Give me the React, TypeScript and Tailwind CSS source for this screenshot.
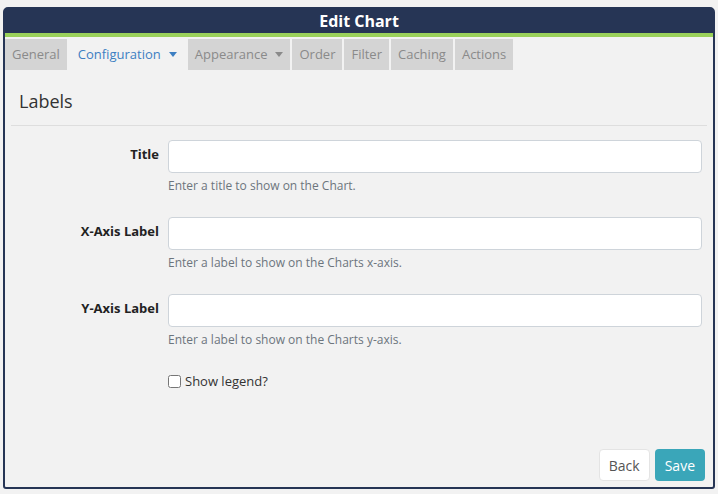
const tabs = [
  { label: "General" },
  { label: "Configuration", caret: true, active: true },
  { label: "Appearance", caret: true },
  { label: "Order" },
  { label: "Filter" },
  { label: "Caching" },
  { label: "Actions" },
];

const fields = [
  { id: "title", label: "Title", help: "Enter a title to show on the Chart." },
  { id: "x-axis", label: "X-Axis Label", help: "Enter a label to show on the Charts x-axis." },
  { id: "y-axis", label: "Y-Axis Label", help: "Enter a label to show on the Charts y-axis." },
];

function Caret({ className }: { className: string }) {
  return (
    <svg width="8" height="5" viewBox="0 0 8 5" className={className}>
      <path d="M0 0h8L4 5z" fill="currentColor" />
    </svg>
  );
}

export default function App() {
  return (
    <div
      className="w-[718px] h-[494px] bg-[#f2f2f2] pt-[7px] pl-[3px]"
      style={{ fontFamily: '"Open Sans", "Liberation Sans", sans-serif' }}
    >
      <div className="w-[712px] h-[482px] border-2 border-[#263555] rounded-t-[5px] rounded-b-[3px] flex flex-col bg-[#f2f2f2]">
        {/* Header */}
        <div className="h-[24px] bg-[#263555] flex items-center justify-center text-white font-bold text-[16px] leading-none">
          Edit Chart
        </div>
        <div className="h-[4px] bg-[#9ad15a]" />

        {/* Tabs */}
        <div className="flex gap-[2px] mt-[2px] h-[31px]">
          {tabs.map((t) => (
            <div
              key={t.label}
              className={
                t.active
                  ? "flex items-center gap-[8px] px-[9px] text-[13px] text-[#3d7fc2] bg-[#f2f2f2]"
                  : "flex items-center gap-[8px] px-[7px] text-[13px] text-[#8a8a8a] bg-[#d4d4d4]"
              }
            >
              {t.label}
              {t.caret && (
                <Caret className={t.active ? "text-[#3d7fc2]" : "text-[#8a8a8a]"} />
              )}
            </div>
          ))}
        </div>

        {/* Content */}
        <div className="flex-1 flex flex-col px-[6px]">
          <div className="pt-[18px] pb-[10px] px-[8px] border-b border-[#dedede]">
            <h2 className="text-[18px] leading-[27px] text-[#333]">Labels</h2>
          </div>

          <div className="flex flex-col gap-[22px] pt-[14px]">
            {fields.map((f) => (
              <div key={f.id} className="flex items-start">
                <label
                  htmlFor={f.id}
                  className="w-[148px] shrink-0 text-right pt-[4px] text-[13px] leading-[20px] font-bold text-[#222]"
                >
                  {f.label}
                </label>
                <div className="ml-[9px] w-[534px]">
                  <input
                    id={f.id}
                    className="w-full h-[33px] bg-white border border-[#ced4da] rounded-[4px] px-2 text-[14px] outline-none"
                  />
                  <p className="mt-[4px] text-[12px] leading-[18px] text-[#6c757d]">{f.help}</p>
                </div>
              </div>
            ))}

            <div className="flex items-center ml-[157px] gap-[4px] text-[13px] leading-[20px] text-[#333]">
              <input type="checkbox" className="w-[13px] h-[13px] m-0" />
              <span>Show legend?</span>
            </div>
          </div>

          {/* Footer */}
          <div className="mt-auto flex justify-end gap-[5px] pb-[6px] pr-[2px]">
            <button className="h-[32px] px-[9px] bg-white border border-[#e4e4e4] rounded-[4px] text-[14px] text-[#555]">
              Back
            </button>
            <button className="h-[32px] px-[10px] bg-[#3aa6b9] rounded-[4px] text-[14px] text-white">
              Save
            </button>
          </div>
        </div>
      </div>
    </div>
  );
}
